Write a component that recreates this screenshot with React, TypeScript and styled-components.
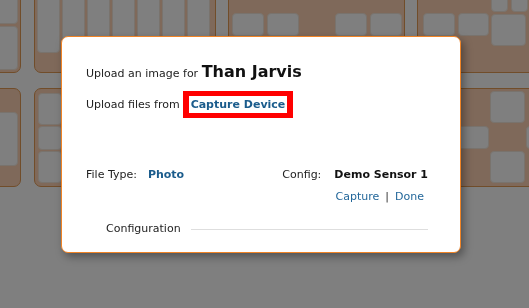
import React from "react";
import styled, { createGlobalStyle } from "styled-components";

const GlobalStyle = createGlobalStyle`
  html, body {
    margin: 0;
    padding: 0;
    width: 529px;
    height: 308px;
    overflow: hidden;
    background: #ffffff;
    font-family: "DejaVu Sans", Tahoma, Verdana, sans-serif;
  }
`;

function App() {
  return (
    <>
      <GlobalStyle />
      <Viewport>
        <Page>
          <Row>
            <Card $width={31} $first>
              <Stack>
                <Tile $h={43} />
                <Tile $h={44} />
              </Stack>
            </Card>
            <Card $width={182}>
              <Columns>
                {Array.from({ length: 7 }).map((_, i) => (
                  <Tile key={i} $w={23} $h={70} />
                ))}
              </Columns>
            </Card>
            <Card $width={177}>
              <Pairs>
                <Pair>
                  <Tile $w={32} $h={23} />
                  <Tile $w={32} $h={23} />
                </Pair>
                <Pair>
                  <Tile $w={32} $h={23} />
                  <Tile $w={32} $h={23} />
                </Pair>
              </Pairs>
            </Card>
            <Card $width={150}>
              <Corner>
                <Pair>
                  <Tile $w={32} $h={23} />
                  <Tile $w={31} $h={23} />
                </Pair>
                <Stack>
                  <Pair>
                    <Tile $w={17} $h={29} />
                    <Tile $w={17} $h={29} />
                  </Pair>
                  <Tile $w={35} $h={32} />
                </Stack>
                <Tile $w={30} $h={50} />
              </Corner>
            </Card>
          </Row>
          <Row $second>
            <Card $width={31} $first>
              <Split>
                <Tile $h={54} />
              </Split>
            </Card>
            <Card $width={182}>
              <Stacked>
                <Tile $w={24} $h={32} />
                <Tile $w={24} $h={24} />
                <Tile $w={24} $h={32} />
              </Stacked>
            </Card>
            <Card $width={177} />
            <Card $width={150}>
              <Checker>
                <Tile $w={39} $h={23} />
                <Stack>
                  <Tile $w={35} $h={32} />
                  <Gap />
                  <Tile $w={35} $h={32} />
                </Stack>
                <Tile $w={30} $h={23} />
              </Checker>
            </Card>
          </Row>
        </Page>
        <Backdrop />
      </Viewport>
      <Modal>
        <Heading>
          Upload an image for <Name>Than Jarvis</Name>
        </Heading>
        <SourceRow>
          Upload files from
          <Highlight>
            <StrongLink>Capture Device</StrongLink>
          </Highlight>
        </SourceRow>
        <Details>
          <Field>
            File Type:
            <StrongLink>Photo</StrongLink>
          </Field>
          <ConfigBox>
            <Field $gap={13}>
              Config:
              <Value>Demo Sensor 1</Value>
            </Field>
            <Actions>
              <Link>Capture</Link>
              <Divider>|</Divider>
              <Link>Done</Link>
            </Actions>
          </ConfigBox>
        </Details>
        <Section>
          <SectionTitle>Configuration</SectionTitle>
          <Rule />
        </Section>
      </Modal>
    </>
  );
}

export default App;

const Viewport = styled.div`
  position: relative;
  width: 529px;
  height: 308px;
  overflow: hidden;
`;

const Page = styled.div`
  margin-top: -20px;
  margin-left: -10px;
  display: flex;
  flex-direction: column;
  gap: 15px;
`;

const Row = styled.div<{ $second?: boolean }>`
  display: flex;
  gap: 12px;
  height: ${(p) => (p.$second ? "99px" : "93px")};
`;

const Card = styled.div<{ $width: number; $first?: boolean }>`
  box-sizing: border-box;
  width: ${(p) => p.$width}px;
  flex-shrink: 0;
  height: 100%;
  background: #fed3b4;
  border: 1px solid #e39a55;
  border-radius: 7px;
  padding: ${(p) => (p.$first ? "0 2px 0 0" : "2px")};
  overflow: hidden;
  margin-right: ${(p) => (p.$first ? "1px" : "0")};
`;

const Tile = styled.div<{ $w?: number; $h: number }>`
  box-sizing: border-box;
  width: ${(p) => (p.$w ? `${p.$w}px` : "100%")};
  height: ${(p) => p.$h}px;
  flex-shrink: 0;
  background: #ffffff;
  border: 1px solid #f3e6da;
  border-radius: 4px;
`;

const Stack = styled.div`
  display: flex;
  flex-direction: column;
  gap: 2px;
`;

const Columns = styled.div`
  display: flex;
  gap: 2px;
`;

const Pairs = styled.div`
  display: flex;
  justify-content: space-between;
  padding: 30px 0 0 1px;
`;

const Pair = styled.div`
  display: flex;
  gap: 3px;
`;

const Corner = styled.div`
  display: flex;
  align-items: flex-start;
  gap: 2px;
  padding-left: 3px;

  & > ${Pair} {
    margin-top: 30px;
  }
`;

const Split = styled.div`
  padding-top: 23px;
`;

const Stacked = styled.div`
  display: flex;
  flex-direction: column;
  gap: 1px;
  padding: 2px 0 0 1px;
`;

const Checker = styled.div`
  display: flex;
  align-items: center;
  gap: 1px;
  padding-left: 30px;
`;

const Gap = styled.div`
  height: 24px;
`;

const Backdrop = styled.div`
  position: absolute;
  inset: 0;
  background: rgba(0, 0, 0, 0.5);
`;

const Modal = styled.div`
  position: fixed;
  left: 61px;
  top: 36px;
  box-sizing: border-box;
  width: 400px;
  height: 217px;
  padding: 25px 32px 0 24px;
  background: #ffffff;
  border: 1px solid #f08325;
  border-radius: 7px;
  box-shadow: 3px 4px 8px rgba(0, 0, 0, 0.35);
  color: #222222;
  font-size: 11px;
`;

const Heading = styled.div`
  line-height: 20px;
  height: 20px;
`;

const Name = styled.span`
  font-size: 16px;
  font-weight: bold;
  color: #111111;
`;

const SourceRow = styled.div`
  display: flex;
  align-items: center;
  margin-top: 9px;
`;

const Highlight = styled.span`
  display: block;
  margin-left: 3px;
  border-style: solid;
  border-color: #ff0000;
  border-width: 5px 6px;
  padding: 0 2px;
  line-height: 17px;
`;

const StrongLink = styled.span`
  font-weight: bold;
  color: #1b5c8c;
`;

const Details = styled.div`
  display: flex;
  justify-content: space-between;
  align-items: flex-start;
  margin-top: 49px;
`;

const Field = styled.div<{ $gap?: number }>`
  display: flex;
  align-items: center;
  gap: ${(p) => p.$gap ?? 11}px;
  line-height: 16px;
`;

const ConfigBox = styled.div`
  display: flex;
  flex-direction: column;
  align-items: flex-end;
  gap: 6px;
`;

const Value = styled.span`
  font-weight: bold;
  color: #111111;
`;

const Actions = styled.div`
  display: flex;
  align-items: center;
  gap: 6px;
  padding-right: 4px;
  line-height: 16px;
`;

const Link = styled.span`
  color: #23679a;
`;

const Divider = styled.span`
  color: #333333;
`;

const Section = styled.div`
  display: flex;
  align-items: center;
  gap: 10px;
  margin-top: 16px;
  padding-left: 20px;
  line-height: 16px;
`;

const SectionTitle = styled.span`
  color: #222222;
`;

const Rule = styled.div`
  flex: 1;
  height: 1px;
  background: #dedede;
`;
